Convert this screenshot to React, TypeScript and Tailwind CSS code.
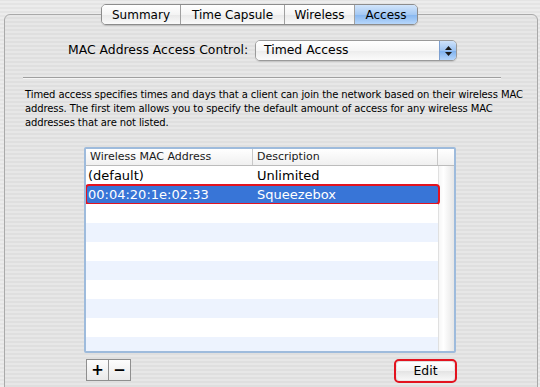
import React from "react";

const rows = [
  { mac: "(default)", desc: "Unlimited" },
  { mac: "00:04:20:1e:02:33", desc: "Squeezebox", selected: true },
  {}, {}, {}, {}, {}, {}, {}, {},
];

const tabs = [
  { label: "Summary", w: "w-[78px]" },
  { label: "Time Capsule", w: "w-[104px]" },
  { label: "Wireless", w: "w-[70px]" },
  { label: "Access", w: "w-[63px]", active: true },
];

export default function App() {
  return (
    <div
      className="w-[540px] h-[387px] overflow-hidden pt-[4px] text-black bg-[repeating-linear-gradient(0deg,#ececec_0px,#ececec_2px,#e4e4e4_2px,#e4e4e4_4px)]"
      style={{ fontFamily: '"DejaVu Sans", "Liberation Sans", sans-serif' }}
    >
      {/* tab bar */}
      <div className="relative z-10 flex pl-[101px]">
        <div className="flex h-[21px] rounded-[5px] border border-[#8c8c8c] overflow-hidden shadow-[0_1px_1px_rgba(0,0,0,0.15)]">
          {tabs.map((t, i) => (
            <div
              key={t.label}
              className={
                "flex items-center justify-center text-[12px] " +
                t.w +
                (i > 0 ? " border-l border-[#a0a0a0]" : "") +
                (t.active
                  ? " bg-[linear-gradient(#d2e5fb,#a5c9f3_50%,#86b6ef_51%,#b7d7fb)]"
                  : " bg-[linear-gradient(#ffffff,#f4f4f4_50%,#e8e8e8_51%,#fafafa)]")
              }
            >
              {t.label}
            </div>
          ))}
        </div>
      </div>

      {/* panel */}
      <div className="-mt-[11px] ml-[4px] w-[534px] h-[400px] rounded-[6px] border border-[#a9a9a9] bg-[repeating-linear-gradient(0deg,#e7e7e7_0px,#e7e7e7_2px,#dfdfdf_2px,#dfdfdf_4px)]">
        {/* access control popup */}
        <div className="flex items-center mt-[25px] pl-[63px] h-[21px]">
          <span className="text-[12.4px] w-[187px]">MAC Address Access Control:</span>
          <div className="flex w-[202px] h-[21px] rounded-[5px] border border-[#9a9a9a] overflow-hidden shadow-[0_1px_1px_rgba(0,0,0,0.12)]">
            <div className="flex-1 flex items-center pl-[8px] text-[12.4px] bg-[linear-gradient(#ffffff,#f6f6f6_50%,#ececec_51%,#fbfbfb)]">
              Timed Access
            </div>
            <div className="w-[17px] flex flex-col items-center justify-center gap-[2px] border-l border-[#7c9fd0] bg-[linear-gradient(#cfe3fb,#9cc3f2_50%,#7cb0ee_51%,#b6d6fb)]">
              <svg width="7" height="4" viewBox="0 0 7 4"><path d="M3.5 0L7 4H0z" fill="#1a1a1a" /></svg>
              <svg width="7" height="4" viewBox="0 0 7 4"><path d="M0 0h7L3.5 4z" fill="#1a1a1a" /></svg>
            </div>
          </div>
        </div>

        {/* separator */}
        <div className="mt-[16px] ml-[18px] w-[478px] h-[1px] bg-[#9f9f9f] border-b border-[#f4f4f4] box-content" />

        <p className="mt-[9px] ml-[20px] w-[500px] text-[10px] leading-[14px] tracking-[-0.1px]">
          Timed access specifies times and days that a client can join the network based on their wireless MAC address. The first item allows you to specify the default amount of access for any wireless MAC addresses that are not listed.
        </p>

        {/* table */}
        <div className="mt-[17px] ml-[79px] w-[372px] h-[206px] border-2 border-[#9ebbdc] rounded-[2px] bg-white overflow-hidden flex flex-col">
          <div className="flex h-[17px] border-b border-[#bcbcbc] bg-[linear-gradient(#ffffff,#f0f0f0)] text-[11px] text-[#1a1a1a] shrink-0">
            <div className="w-[167px] pl-[4px] flex items-center border-r border-[#c8c8c8]">Wireless MAC Address</div>
            <div className="w-[185px] pl-[4px] flex items-center border-r border-[#c8c8c8]">Description</div>
            <div className="flex-1" />
          </div>
          <div className="flex flex-1">
            <div className="w-[352px] flex flex-col">
              {rows.map((r, i) => (
                <div
                  key={i}
                  className={
                    "relative flex h-[19px] shrink-0 items-center text-[13px] " +
                    (r.selected
                      ? "bg-[#3875d7] text-white"
                      : i % 2 === 1
                      ? "bg-[#edf3fe]"
                      : "bg-white")
                  }
                >
                  <div className="w-[168px] pl-[2px]">{r.mac}</div>
                  <div className="pl-[3px]">{r.desc}</div>
                  {r.selected && (
                    <div className="absolute -left-[1px] -top-[1px] w-[355px] h-[21px] rounded-[4px] border-[2px] border-[#e3131f]" />
                  )}
                </div>
              ))}
            </div>
            <div className="flex-1 bg-[linear-gradient(90deg,#f6f6f6,#ffffff_30%,#e6e6e6)] border-l border-[#e0e0e0]" />
          </div>
        </div>

        {/* buttons */}
        <div className="flex mt-[6px] ml-[81px] w-[371px] items-start">
          <div className="flex h-[22px] border border-[#8f8f8f] bg-[linear-gradient(#fdfdfd,#e9e9e9)]">
            <div className="w-[22px] flex items-center justify-center border-r border-[#8f8f8f] text-[15px] font-bold leading-none">+</div>
            <div className="w-[21px] flex items-center justify-center text-[15px] font-bold leading-none">−</div>
          </div>
          <div className="ml-auto w-[63px] h-[24px] rounded-[5px] border-[2px] border-[#e3131f] p-[1px]">
            <div className="h-full rounded-[3px] bg-[linear-gradient(#ffffff,#f3f3f3_50%,#e4e4e4_51%,#f7f7f7)] flex items-center justify-center text-[12.4px]">
              Edit
            </div>
          </div>
        </div>
      </div>
    </div>
  );
}
